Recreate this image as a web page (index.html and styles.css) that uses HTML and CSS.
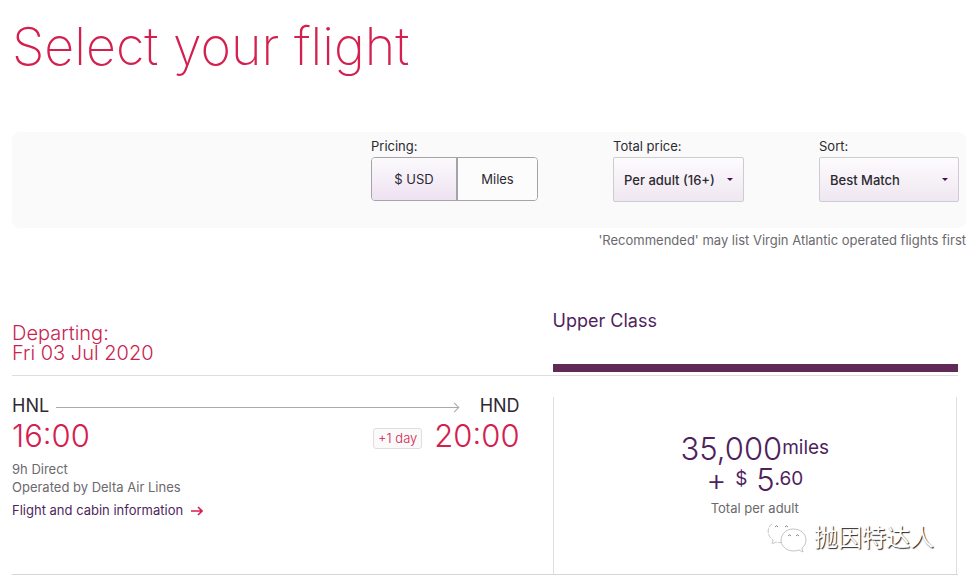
FILE: index.html
```html
<!DOCTYPE html>
<html lang="en">
    <head>
        <meta charset="utf-8">
        <title>Select your flight</title>
        <link rel="stylesheet" href="styles.css">
    </head>
    <body>
        <h1>Select your flight</h1>

        <form class="filters">
            <div class="filter" role="group" aria-labelledby="pricing-label">
                <span class="filter-label" id="pricing-label">Pricing:</span>
                <div class="toggle">
                    <button type="button" class="active" aria-pressed="true">$ USD</button>
                    <button type="button" aria-pressed="false">Miles</button>
                </div>
            </div>
            <div class="filter">
                <label class="filter-label" for="total-price">Total price:</label>
                <div class="select">
                    <select id="total-price" class="select-price">
                        <option>Per adult (16+)</option>
                    </select>
                </div>
            </div>
            <div class="filter">
                <label class="filter-label" for="sort">Sort:</label>
                <div class="select">
                    <select id="sort" class="select-sort">
                        <option>Best Match</option>
                    </select>
                </div>
            </div>
        </form>
        <p class="note">'Recommended' may list Virgin Atlantic operated flights first</p>

        <main>
            <div class="row head">
                <h2 class="departing">Departing:<br>Fri 03 Jul 2020</h2>
                <h3 class="cabin">Upper Class</h3>
            </div>

            <div class="row flight">
                <section class="details">
                    <div class="route">
                        <span>HNL</span>
                        <span class="line"></span>
                        <span>HND</span>
                    </div>
                    <div class="times">
                        <span>16:00</span>
                        <span class="day">+1 day</span>
                        <span>20:00</span>
                    </div>
                    <p class="info">9h Direct<br>Operated by Delta Air Lines</p>
                    <a class="more" href="#info">Flight and cabin information
                        <svg width="12" height="10" viewBox="0 0 12 10" fill="none" stroke="#d81e4f" stroke-width="1.6"><path d="M0 5h11M7 1l4 4-4 4"/></svg>
                    </a>
                </section>
                <section class="price">
                    <div class="amount">35,000<span class="small">miles</span></div>
                    <div class="amount">+ <span class="small">$</span> 5<span class="small">.60</span></div>
                    <p class="per">Total per adult</p>
                </section>
            </div>
        </main>

        <div class="watermark">
            <svg width="40" height="33" viewBox="0 0 40 33" fill="#fff" stroke="#aaa" stroke-width="0.7">
                <path d="M16 22c-3 1-5 .6-7 0l-4 2 1-4C-1 15 0 7 6 3" stroke-dasharray="5 1"/>
                <path d="M26 9c8 0 13 5 13 11 0 4-2 6-4 8l1 4-4-2c-8 3-17-1-18-9C14 14 19 9 26 9z"/>
                <path d="M8 7q1.500-2.500 3 0M18 7q1.500-2.500 3 0M21 16q1.500-2.500 3 0M29 16q1.500-2.500 3 0" fill="none" stroke="#555"/>
            </svg>
            <span lang="zh">抛因特达人</span>
        </div>
    </body>
</html>
```
FILE: styles.css
```css
* { box-sizing: border-box; }

body {
    margin: 0;
    background: #fff;
    color: #2c2a31;
    font-family: Inter, "Liberation Sans", sans-serif;
    font-size: 13px;
    line-height: 18px;
}

h1 {
    margin: 0;
    padding: 17px 12px 55px;
    color: #d4204f;
    font-size: 52px;
    line-height: 60px;
    font-weight: 200;
}

.filters {
    display: flex;
    justify-content: flex-end;
    gap: 75px;
    margin-left: 12px;
    padding: 5px 7px 26px 0;
    border-radius: 8px;
    background: #fafafa;
}
.filter-label {
    display: block;
    margin-bottom: 2px;
}

.toggle {
    display: flex;
    border: 1px solid #a5a2a8;
    border-radius: 4px;
    overflow: hidden;
}
.toggle button {
    width: 79px;
    height: 42px;
    border: 0;
    background: #fcfcfc;
    color: #2c2a31;
    font: inherit;
}
.toggle .active {
    width: 86px;
    border-right: 2px solid #a5a2a8;
    background: linear-gradient(#fcfafd, #eee2f1);
}

.select { position: relative; }
.select::after {
    content: "";
    position: absolute;
    top: 21px; right: 11px;
    border: 3px solid transparent;
    border-top-color: #4b0c5e;
    pointer-events: none;
}
.select select {
    appearance: none;
    display: block;
    height: 45px;
    padding: 0 10px;
    border: 1px solid #cfcbd2;
    border-radius: 2px;
    background: linear-gradient(#fdfcfd, #efe6f1);
    color: #2c2a31;
    font: inherit;
    font-weight: 500;
}
.select .select-price { width: 131px; }
.select .select-sort { width: 140px; }

.note {
    margin: 3px 0 0;
    color: #6b696e;
    text-align: right;
}

main {
    margin: 51px 8px 0 12px;
}
.row {
    display: grid;
    grid-template-columns: 4fr 3fr;
}

.head {
    border-bottom: 1px solid #e0dde2;
    padding-bottom: 3px;
}
.departing {
    margin: 0;
    padding: 23px 0 9px;
    color: #c9244f;
    font-size: 20px;
    line-height: 20px;
    font-weight: 300;
}
.cabin {
    margin: 0;
    padding-top: 10px;
    border-bottom: 8px solid #612a56;
    color: #4f1f5e;
    font-size: 18px;
    line-height: 22px;
    font-weight: 400;
}

.flight {
    padding-top: 21px;
    border-bottom: 1px solid #d8d5da;
}
.details {
    padding-right: 33px;
}
.route {
    display: flex;
    align-items: center;
    font-size: 18px;
    line-height: 18px;
}
.line {
    position: relative;
    flex: 1;
    margin: 2px 22px 0 7px;
    border-top: 1px solid #aaa;
}
.line::after {
    content: "";
    position: absolute;
    right: 0; top: -4px;
    width: 6px; height: 6px;
    border: solid #aaa;
    border-width: 1px 1px 0 0;
    transform: rotate(45deg);
}
.times {
    display: flex;
    align-items: center;
    padding-top: 5px;
    color: #d4204f;
    font-size: 31px;
    line-height: 32px;
    font-weight: 300;
}
.day {
    margin: 4px 12px 0 auto;
    padding: 0 4px;
    border: 1px solid #dedede;
    border-radius: 3px;
    background: #fafafa;
    font-size: 13px;
    line-height: 19px;
}
.info {
    margin: 8px 0 5px;
    color: #6b696e;
}
.more {
    color: #4f1f5e;
    text-decoration: none;
}
.more svg {
    margin-left: 4px;
    vertical-align: -1px;
}

.price {
    min-height: 177px;
    margin-right: 1px;
    padding-top: 36px;
    border: solid #e0dde2;
    border-width: 0 1px;
    color: #4f1f5e;
    text-align: center;
}
.amount {
    font-size: 31px;
    line-height: 31px;
    font-weight: 300;
}
.small {
    font-size: 19px;
    line-height: 19px;
    font-weight: 400;
    vertical-align: 6px;
}
.per {
    margin: 4px 0 0;
    color: #6b696e;
}

.watermark {
    position: absolute;
    right: 32px; bottom: 26px;
    display: flex;
    align-items: center;
    gap: 7px;
    color: #fff;
    font-family: "Noto Sans CJK SC", sans-serif;
    font-size: 24px;
    line-height: 34px;
    text-shadow: 1px 1px 1px #222;
}
```
